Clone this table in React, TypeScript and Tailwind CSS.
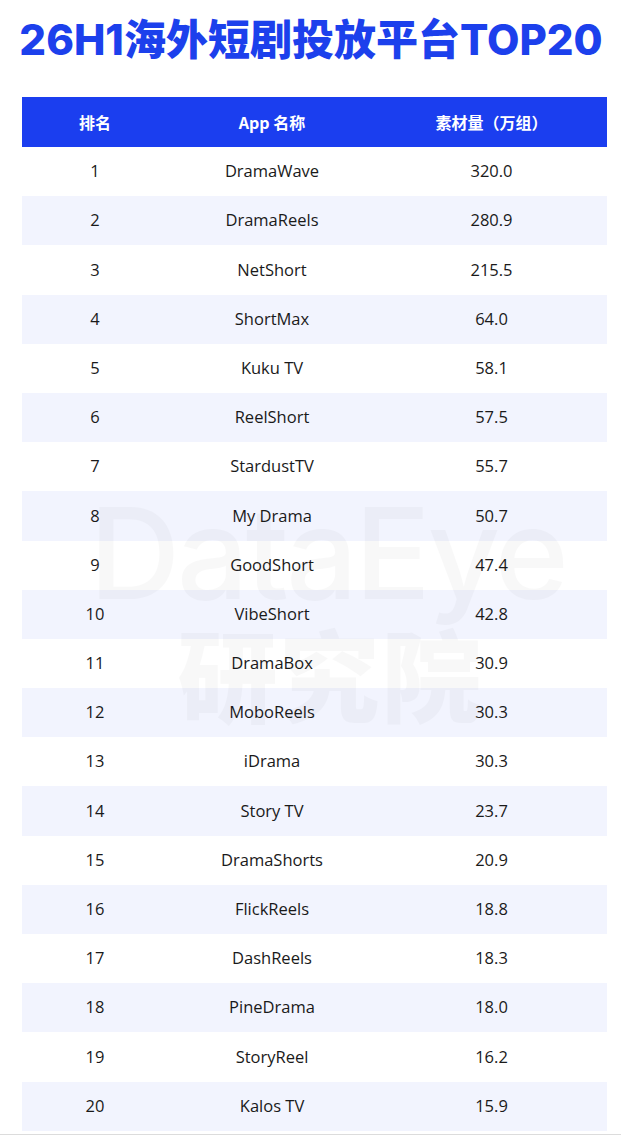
import React from "react";

const rows: [number, string, string][] = [
  [1, "DramaWave", "320.0"],
  [2, "DramaReels", "280.9"],
  [3, "NetShort", "215.5"],
  [4, "ShortMax", "64.0"],
  [5, "Kuku TV", "58.1"],
  [6, "ReelShort", "57.5"],
  [7, "StardustTV", "55.7"],
  [8, "My Drama", "50.7"],
  [9, "GoodShort", "47.4"],
  [10, "VibeShort", "42.8"],
  [11, "DramaBox", "30.9"],
  [12, "MoboReels", "30.3"],
  [13, "iDrama", "30.3"],
  [14, "Story TV", "23.7"],
  [15, "DramaShorts", "20.9"],
  [16, "FlickReels", "18.8"],
  [17, "DashReels", "18.3"],
  [18, "PineDrama", "18.0"],
  [19, "StoryReel", "16.2"],
  [20, "Kalos TV", "15.9"],
];

export default function App() {
  return (
    <div className="relative w-[621px] h-[1140px] bg-white overflow-hidden">
      <div className="h-[97px] flex items-start justify-center pt-[15px] pl-[1px]">
        <h1
          className="text-[42px] leading-[50px] font-extrabold text-[#1c40ec]"
          style={{ fontFamily: 'Inter, "Noto Sans CJK SC", sans-serif' }}
        >
          26H1海外短剧投放平台TOP20
        </h1>
      </div>
      <div
        className="ml-[22px] w-[585px]"
        style={{ fontFamily: '"Open Sans", "Noto Sans CJK SC", sans-serif' }}
      >
        <div
          className="grid grid-cols-[146px_208px_231px] h-[50px] items-center bg-[#1b3eef] text-white text-[16px] font-bold"
          style={{ fontFamily: '"Noto Sans CJK SC", sans-serif' }}
        >
          <div className="text-center">排名</div>
          <div className="text-center">App 名称</div>
          <div className="text-center">素材量（万组）</div>
        </div>
        {rows.map(([rank, name, val], i) => (
          <div
            key={rank}
            className={
              "grid grid-cols-[146px_208px_231px] h-[49.2px] items-center text-[16.5px] text-[#1a1a1a] " +
              (i % 2 === 1 ? "bg-[#f2f4fe]" : "bg-white")
            }
          >
            <div className="text-center">{rank}</div>
            <div className="text-center">{name}</div>
            <div className="text-center">{val}</div>
          </div>
        ))}
      </div>
      <div className="mt-[3px] h-[1px] bg-[#dcdcdc]" />
      <div
        aria-hidden="true"
        className="pointer-events-none select-none absolute left-0 top-[486px] w-[621px] flex flex-col items-center text-black opacity-[0.025]"
        style={{ fontFamily: 'Inter, "Noto Sans CJK SC", sans-serif' }}
      >
        <div className="pl-[34px] text-[126px] leading-[135px] font-medium tracking-[-3px]">DataEye</div>
        <div className="pl-[40px] -mt-[2px] text-[100px] leading-[120px] font-black tracking-[2px]">研究院</div>
      </div>
    </div>
  );
}
